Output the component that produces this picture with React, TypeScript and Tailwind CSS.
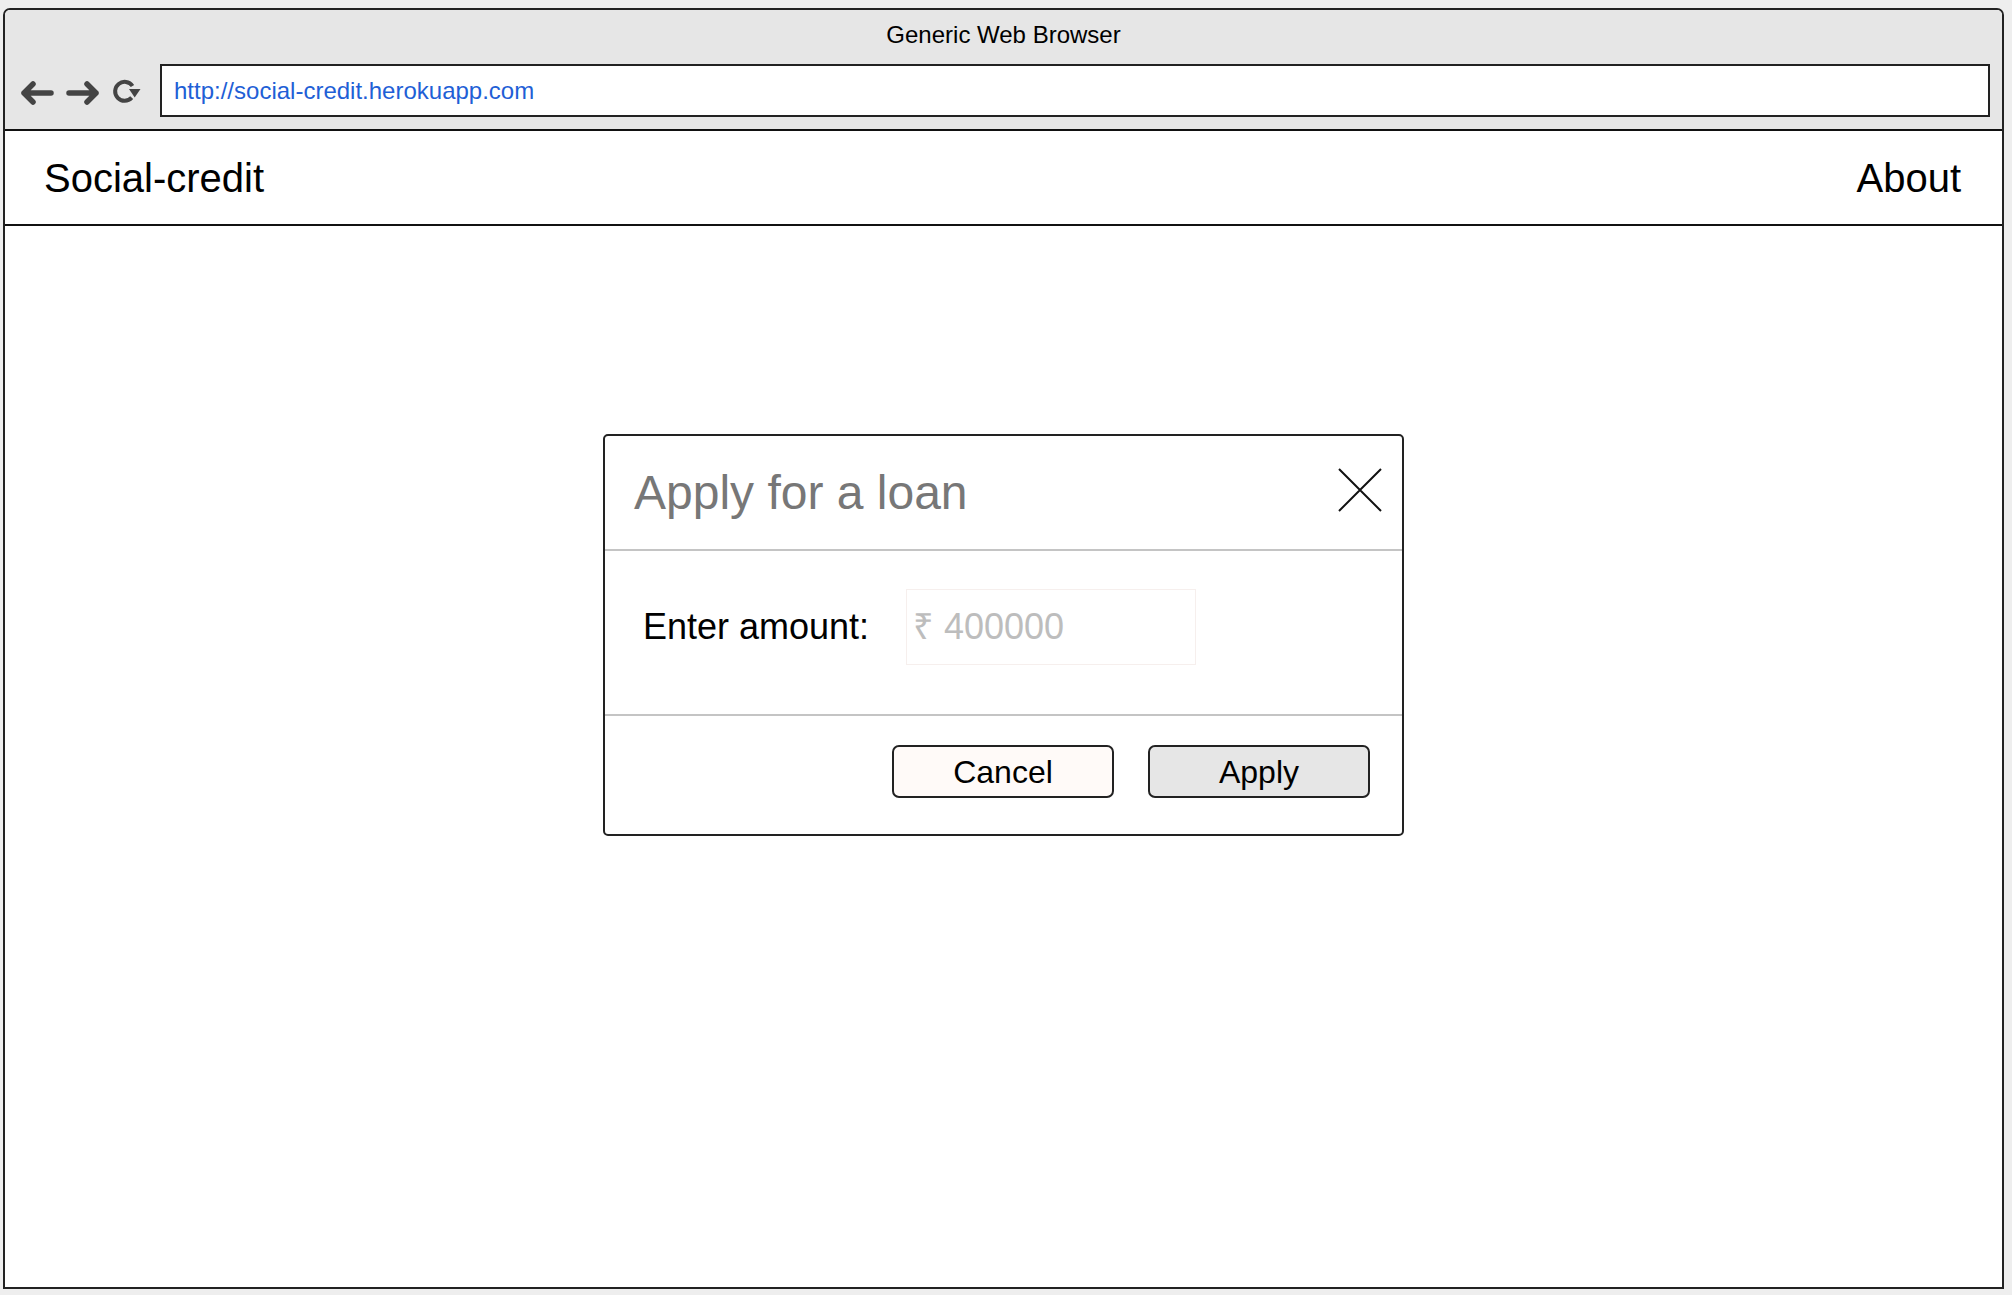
import React from "react";

const font = { fontFamily: '"Liberation Sans", Arial, Helvetica, sans-serif' };

function BackArrow() {
  return (
    <svg width="34" height="24" viewBox="0 0 34 24" className="mt-[5px]">
      <path d="M31 12 H4 M13 3 L4 12 L13 21" fill="none" stroke="#444" strokeWidth="5.5" strokeLinecap="round" strokeLinejoin="round" />
    </svg>
  );
}
function FwdArrow() {
  return (
    <svg width="34" height="24" viewBox="0 0 34 24" className="mt-[5px]">
      <path d="M3 12 H30 M21 3 L30 12 L21 21" fill="none" stroke="#444" strokeWidth="5.5" strokeLinecap="round" strokeLinejoin="round" />
    </svg>
  );
}
function Reload() {
  return (
    <svg width="30" height="28" viewBox="0 0 30 28" className="mt-[1px]">
      <path d="M19.7 20.7 A9.5 9.5 0 1 1 20.5 9" fill="none" stroke="#444" strokeWidth="4" strokeLinecap="butt" />
      <path d="M17 12 L28.5 12 L22.7 20.5 Z" fill="#444" />
    </svg>
  );
}

export default function App() {
  return (
    <div className="w-[2012px] h-[1295px] bg-[#eeeeee] pt-[8px] pl-[3px] pr-[8px] pb-[6px]" style={font}>
      <div className="flex flex-col h-full border-2 border-[#222222] rounded-t-[7px] bg-white overflow-hidden">
        <div className="bg-[#e6e6e6] border-b-2 border-[#111111] h-[121px] flex flex-col">
          <div className="h-[54px] flex items-start justify-center pt-[11px] text-[24px] leading-[28px] text-black">Generic Web Browser</div>
          <div className="flex items-center pl-[15px] pr-[12px]">
            <div className="flex items-center gap-[12px] w-[140px]">
              <BackArrow />
              <FwdArrow />
              <Reload />
            </div>
            <div className="flex-1 h-[53px] bg-white border-2 border-[#222222] flex items-center pl-[12px] text-[24px] text-[#1f5fd6]">
              http://social-credit.herokuapp.com
            </div>
          </div>
        </div>
        <div className="h-[95px] border-b-2 border-[#111111] flex items-center justify-between pl-[39px] pr-[41px] text-[40px] text-black">
          <span>Social-credit</span>
          <span>About</span>
        </div>
        <div className="flex-1 flex justify-center pt-[208px]">
          <div className="w-[801px] h-[402px] border-2 border-[#222222] rounded-[5px] bg-white flex flex-col">
            <div className="h-[115px] border-b-2 border-[#c4c4c4] flex items-center justify-between pl-[29px] pr-[19px]">
              <span className="text-[48px] text-[#777777]">Apply for a loan</span>
              <svg width="46" height="46" viewBox="0 0 46 46" className="-mt-[6px]">
                <path d="M2 2 L44 44 M44 2 L2 44" stroke="#111" strokeWidth="2" />
              </svg>
            </div>
            <div className="h-[165px] border-b-2 border-[#c4c4c4] flex items-start pt-[38px] pl-[38px]">
              <span className="text-[36px] text-black w-[263px] mt-[11px]">Enter amount:</span>
              <div className="w-[290px] h-[76px] border border-[#f6efed] flex items-center pl-[6px] text-[36px] text-[#bdbdbd]">
                ₹ 400000
              </div>
            </div>
            <div className="flex-1 flex justify-end items-start pt-[29px] pr-[32px] gap-[34px]">
              <button className="w-[222px] h-[53px] border-2 border-[#222222] rounded-[7px] bg-[#fffaf8] text-[32px] text-black flex items-center justify-center">Cancel</button>
              <button className="w-[222px] h-[53px] border-2 border-[#222222] rounded-[7px] bg-[#e6e6e6] text-[32px] text-black flex items-center justify-center">Apply</button>
            </div>
          </div>
        </div>
      </div>
    </div>
  );
}
